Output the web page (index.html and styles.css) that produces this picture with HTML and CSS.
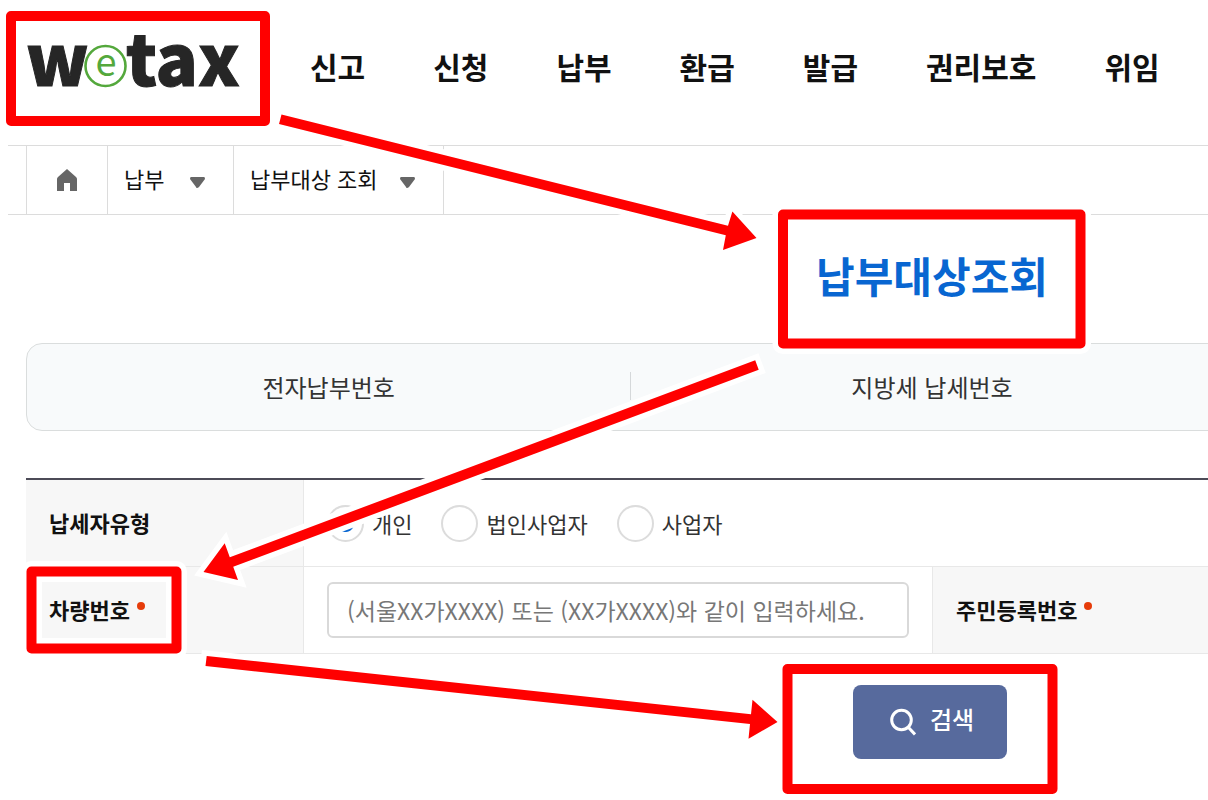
FILE: index.html
```html
<!DOCTYPE html>
<html lang="ko">
<head>
  <meta charset="UTF-8" />
  <meta name="viewport" content="width=device-width, initial-scale=1.0" />
  <title>납부대상조회 - wetax</title>
  <link rel="stylesheet" href="styles.css">
</head>
<body>
  <div class="page">
    <header class="header">
      <a class="logo" href="#" aria-label="wetax">
        <svg width="216" height="70" viewBox="0 0 216 70">
          <text class="logo-text" x="0" y="60">w</text>
          <circle cx="79.5" cy="40" r="20" fill="#fff" stroke="#54a83c" stroke-width="2.6" />
          <text class="logo-e" x="80" y="49.5">e</text>
          <text class="logo-text" x="100" y="60">tax</text>
        </svg>
      </a>
      <nav class="nav">
        <a href="#">신고</a>
        <a href="#">신청</a>
        <a href="#">납부</a>
        <a href="#">환급</a>
        <a href="#">발급</a>
        <a href="#">권리보호</a>
        <a href="#">위임</a>
      </nav>
    </header>

    <div class="breadcrumb">
      <a class="crumb home" href="#" aria-label="홈">
        <svg width="20" height="22" viewBox="0 0 20 22">
          <path d="M10 0 L19 8 Q20 9 20 10 V22 H13 V14 H7 V22 H0 V10 Q0 9 1 8 Z" fill="#666" />
        </svg>
      </a>
      <div class="crumb menu">
        <select class="crumb-first" aria-label="메뉴">
          <option>납부</option>
        </select>
        <svg class="caret" width="15" height="11" viewBox="0 0 15 11">
          <path d="M1 0 H14 Q15 0 15 2 L9 10 Q8 11 7 11 Q6 11 6 10 L0 2 Q0 0 1 0 Z" fill="#666" />
        </svg>
      </div>
      <div class="crumb menu">
        <select class="crumb-second" aria-label="하위 메뉴">
          <option>납부대상 조회</option>
        </select>
        <svg class="caret" width="15" height="11" viewBox="0 0 15 11">
          <path d="M1 0 H14 Q15 0 15 2 L9 10 Q8 11 7 11 Q6 11 6 10 L0 2 Q0 0 1 0 Z" fill="#666" />
        </svg>
      </div>
    </div>

    <main class="content">
      <h1>납부대상조회</h1>

      <div class="tabs">
        <button type="button">전자납부번호</button>
        <button type="button">지방세 납세번호</button>
      </div>

      <form>
        <table class="search-table">
          <colgroup>
            <col class="label-col">
            <col>
            <col class="label-col">
            <col>
          </colgroup>
          <tr>
            <th scope="row">납세자유형</th>
            <td colspan="3">
              <div class="radios">
                <label><input type="radio" name="type" checked>개인</label>
                <label><input type="radio" name="type">법인사업자</label>
                <label><input type="radio" name="type">사업자</label>
              </div>
            </td>
          </tr>
          <tr>
            <th scope="row"><label class="required" for="car">차량번호</label></th>
            <td><input type="text" id="car" placeholder="(서울XX가XXXX) 또는 (XX가XXXX)와 같이 입력하세요."></td>
            <th scope="row"><span class="required">주민등록번호</span></th>
            <td></td>
          </tr>
        </table>

        <div class="actions">
          <button type="button" class="search-button">
            <svg width="26" height="28" viewBox="0 0 26 28" fill="none" stroke="#fff" stroke-width="3">
              <circle cx="11.5" cy="12" r="9.8" />
              <path d="M18.5 19.5 L25 26.5" />
            </svg>
            <span>검색</span>
          </button>
        </div>
      </form>
    </main>

    <!-- step guide: frames and arrows over the page -->
    <svg class="guide" width="1208" height="800" viewBox="0 0 1208 800">
      <g class="arrow">
        <path d="M281.5 114.5 L728 225.7 L732.4 211.5 L756.5 238 L723 250 L725.8 235.3 L279 124 Z" />
        <path d="M755.2 360.3 L229.8 557.2 L224.7 543.3 L203.5 572 L238 580 L233.2 566.8 L758.7 369.7 Z" />
        <path d="M206.7 656 L751 714.3 L752.5 699.7 L777.5 722 L748.5 738.7 L750 724 L205.5 666 Z" />
      </g>
      <g class="frame-edge">
        <rect x="11" y="16" width="254" height="105" />
        <rect x="783" y="214.5" width="297.5" height="129" />
        <rect x="31.5" y="571.5" width="145" height="77" />
      </g>
      <g class="frame">
        <rect x="11" y="16" width="254" height="105" />
        <rect x="783" y="214.5" width="297.5" height="129" />
        <rect x="31.5" y="571.5" width="145" height="77" />
        <rect x="787.5" y="669" width="265" height="120" />
      </g>
    </svg>
  </div>
</body>
</html>
```
FILE: styles.css
```css
* {
  box-sizing: border-box;
}
body {
  margin: 0;
  background: #fff;
  color: #111;
  font-family: "Noto Sans CJK KR", sans-serif;
}
a {
  color: inherit;
  text-decoration: none;
}
.page {
  position: relative;
  min-height: 100vh;
  overflow: hidden;
}
.header {
  display: flex;
  align-items: center;
  height: 145px;
  padding: 0 26px 14px;
}
.logo {
  display: flex;
  margin-right: 68px;
}
.logo svg {
  margin-bottom: 10px;
  overflow: visible;
}
.logo-text {
  font-family: "Noto Sans CJK KR", sans-serif;
  font-size: 70px;
  font-weight: 900;
  fill: #262626;
  stroke: #262626;
  stroke-width: 1;
}
.logo-e {
  font-family: "Noto Sans CJK KR", sans-serif;
  font-size: 38px;
  text-anchor: middle;
  fill: #54a83c;
}
.nav {
  display: flex;
  gap: 68px;
  font-size: 30px;
  font-weight: 700;
  line-height: 40px;
  white-space: nowrap;
}
.breadcrumb {
  display: flex;
  height: 70px;
  margin-left: 8px;
  padding-left: 18px;
  border-top: 1px solid #dcdcdc;
  border-bottom: 1px solid #dcdcdc;
}
.crumb {
  position: relative;
  display: flex;
  align-items: center;
  border-right: 1px solid #dcdcdc;
}
.home {
  width: 82px;
  justify-content: center;
  border-left: 1px solid #dcdcdc;
}
.menu select {
  height: 100%;
  padding: 0 16px 4px;
  border: 0;
  background: none;
  color: #111;
  font-family: inherit;
  font-size: 22px;
  appearance: none;
}
.menu .crumb-first {
  width: 125px;
}
.menu .crumb-second {
  width: 209px;
}
.caret {
  position: absolute;
  top: 31px;
  right: 28px;
  pointer-events: none;
}
/* content runs wider than the window, the rest is cut off on the right */
.content {
  width: 150%;
  margin-left: 26px;
}
h1 {
  margin: 0;
  padding: 30px 0 38px;
  color: #0866d1;
  font-size: 42px;
  font-weight: 700;
  line-height: 60px;
  text-align: center;
}
.tabs {
  display: grid;
  grid-template-columns: repeat(3, 1fr);
  height: 88px;
  border: 1px solid #dadddd;
  border-radius: 16px;
  background: #f8fafb;
}
.tabs button {
  position: relative;
  padding: 0 0 2px;
  border: 0;
  background: none;
  color: #333;
  font-family: inherit;
  font-size: 24px;
}
.tabs button + button::before {
  content: "";
  position: absolute;
  left: 0;
  top: 28px;
  width: 1px;
  height: 28px;
  background: #d5d8da;
}
.search-table {
  width: 100%;
  margin-top: 47px;
  border-top: 2px solid #4c4b57;
  border-spacing: 0;
  table-layout: fixed;
}
.label-col {
  width: 278px;
}
.search-table th,
.search-table td {
  height: 87px;
  padding: 0 23px;
  border-bottom: 1px solid #e8e8e8;
  font-size: 22px;
  text-align: left;
}
.search-table th {
  padding-bottom: 2px;
  border-right: 1px solid #e8e8e8;
  background: #f7f7f7;
  font-weight: 700;
}
.search-table td + th {
  border-left: 1px solid #e8e8e8;
}
.required::after {
  content: "";
  display: inline-block;
  width: 8px;
  height: 8px;
  margin-left: 7px;
  border-radius: 50%;
  background: #e63c0a;
  vertical-align: 9px;
}
.radios {
  display: flex;
  gap: 29px;
}
.radios label {
  display: flex;
  align-items: center;
  gap: 8px;
  color: #333;
}
.radios input {
  width: 37px;
  height: 37px;
  margin: 0;
  border: 2px solid #dcdcdc;
  border-radius: 50%;
  background: #fff;
  appearance: none;
}
.radios input:checked {
  background: radial-gradient(circle, #0866d1 8px, #fff 9px);
}
.search-table input[type="text"] {
  width: 100%;
  height: 56px;
  padding: 0 18px;
  border: 2px solid #d9d9d9;
  border-radius: 6px;
  font-family: inherit;
  font-size: 23px;
}
.search-table input::placeholder {
  color: #777;
}
.actions {
  display: flex;
  justify-content: center;
  padding: 31px 4px 41px 0;
}
.search-button {
  display: flex;
  align-items: center;
  justify-content: center;
  gap: 14px;
  width: 154px;
  height: 74px;
  padding: 0 4px 0 8px;
  border: 0;
  border-radius: 8px;
  background: #576a9d;
  color: #fff;
  font-family: inherit;
  font-size: 24px;
  font-weight: 500;
}
.search-button span {
  padding-bottom: 8px;
}
.guide {
  position: absolute;
  top: 0;
  left: 0;
  pointer-events: none;
}
.frame,
.frame-edge {
  fill: none;
  stroke: #f00;
  stroke-width: 10;
  stroke-linejoin: round;
}
.frame-edge {
  stroke: #fff;
  stroke-width: 21;
}
.arrow {
  fill: #f00;
  stroke: #fff;
  stroke-width: 11;
  paint-order: stroke;
}
```
